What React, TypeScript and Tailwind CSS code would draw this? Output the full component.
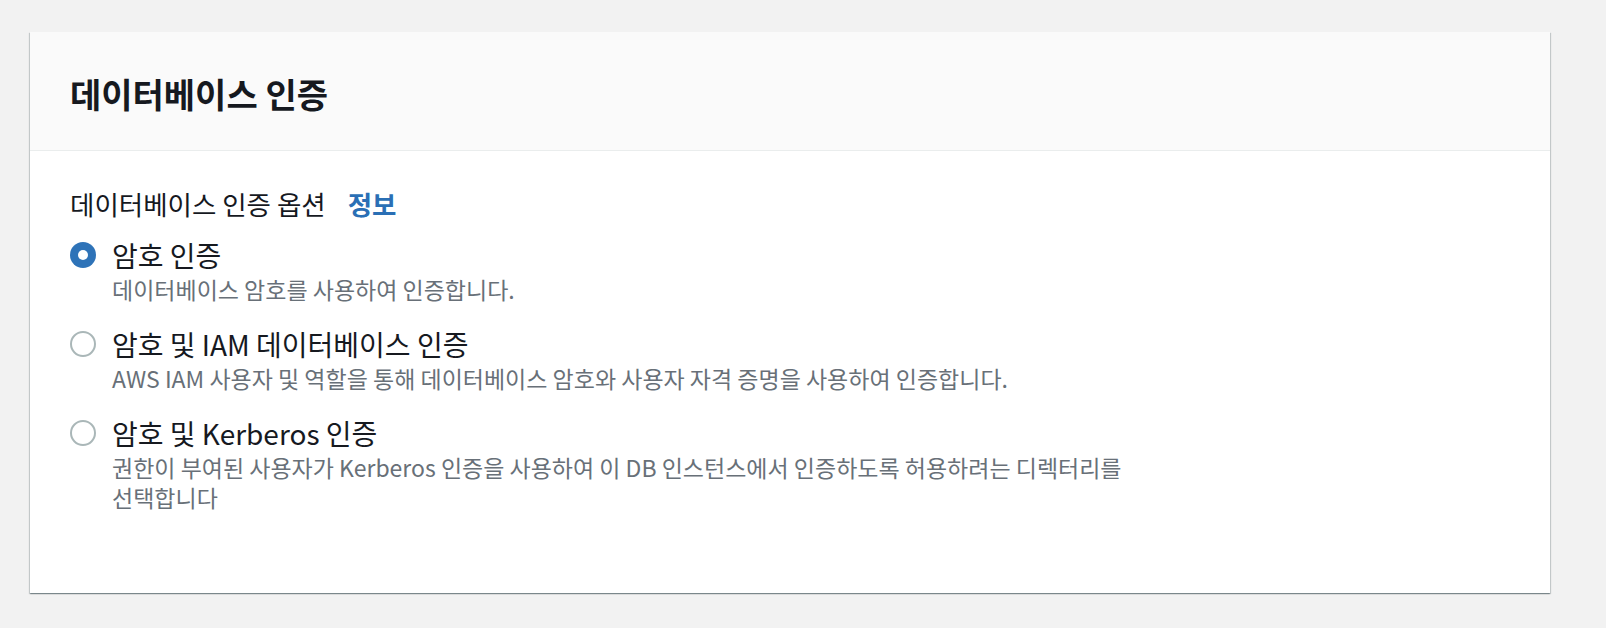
import React, { useState } from 'react';

interface AuthOption {
  id: string;
  label: string;
  description: string;
}

const OPTIONS: AuthOption[] = [
  {
    id: 'password',
    label: '암호 인증',
    description: '데이터베이스 암호를 사용하여 인증합니다.'
  },
  {
    id: 'password-iam',
    label: '암호 및 IAM 데이터베이스 인증',
    description: 'AWS IAM 사용자 및 역할을 통해 데이터베이스 암호와 사용자 자격 증명을 사용하여 인증합니다.'
  },
  {
    id: 'password-kerberos',
    label: '암호 및 Kerberos 인증',
    description: '권한이 부여된 사용자가 Kerberos 인증을 사용하여 이 DB 인스턴스에서 인증하도록 허용하려는 디렉터리를 선택합니다'
  }
];

function RadioDot({ checked }: { checked: boolean }) {
  return checked ? (
    <span className="flex h-[26px] w-[26px] shrink-0 items-center justify-center rounded-full bg-[#2e73b8]">
      <span className="h-[10px] w-[10px] rounded-full bg-white" />
    </span>
  ) : (
    <span className="h-[26px] w-[26px] shrink-0 rounded-full border-2 border-[#aab7b8] bg-white" />
  );
}

export default function App() {
  const [selected, setSelected] = useState('password');

  return (
    <div
      className="min-h-[628px] bg-[#f2f2f2] pl-[30px] pr-[56px] pt-[32px] pb-[36px]"
      style={{ fontFamily: '"Noto Sans CJK KR", "Noto Sans", sans-serif' }}
    >
      <section className="bg-white shadow-[0_1px_1px_0_rgba(0,28,36,0.3),1px_1px_1px_0_rgba(0,28,36,0.15),-1px_1px_1px_0_rgba(0,28,36,0.15)]">
        <header className="border-b border-[#eaeded] bg-[#fafafa] px-[40px] pt-[40px] pb-[34px]">
          <h2 className="text-[34px] font-bold leading-[44px] text-[#16191f]">데이터베이스 인증</h2>
        </header>

        <div className="px-[40px] pt-[36px] pb-[81px]">
          <div className="flex items-center gap-[22px] text-[26.5px] leading-[34px] text-[#16191f]">
            <span>데이터베이스 인증 옵션</span>
            <a className="font-bold text-[#2a6fb5]">정보</a>
          </div>

          <div className="mt-[17px] flex flex-col gap-[23px]">
            {OPTIONS.map((opt) => (
              <label
                key={opt.id}
                className="flex cursor-pointer items-start gap-[16px]"
                onClick={() => setSelected(opt.id)}
              >
                <span className="flex h-[34px] items-center">
                  <RadioDot checked={selected === opt.id} />
                </span>
                <span className="flex flex-col">
                  <span className="text-[28px] leading-[34px] text-[#16191f]">{opt.label}</span>
                  <span className="mt-[2px] max-w-[1040px] break-keep text-[23px] leading-[30px] text-[#687078]">
                    {opt.description}
                  </span>
                </span>
              </label>
            ))}
          </div>
        </div>
      </section>
    </div>
  );
}
